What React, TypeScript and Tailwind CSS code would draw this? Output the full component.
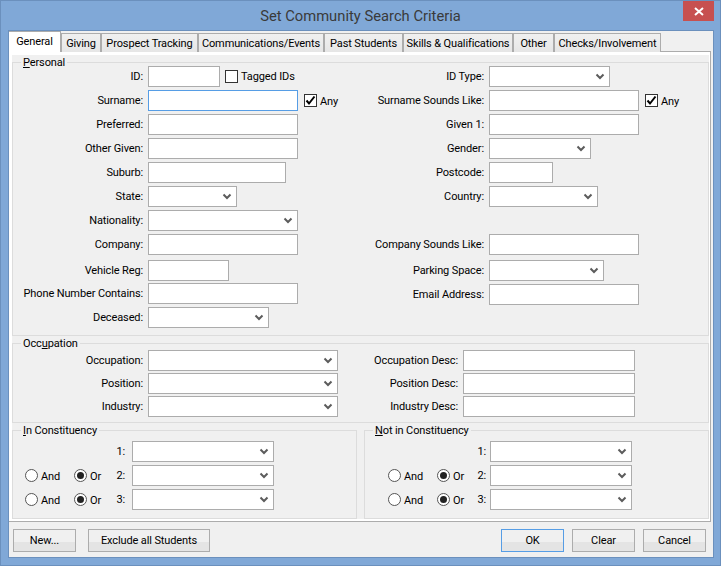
import type { ReactNode } from 'react';

const FONT = "font-['Roboto',sans-serif] text-[11px] tracking-[-0.12px] leading-[14px] text-black";

function Chevron() {
    return (
        <svg width="10" height="7" viewBox="0 0 10 7" className="shrink-0">
            <path d="M1.5 1.5 L5 5 L8.5 1.5" fill="none" stroke="#5c5c5c" strokeWidth="2" />
        </svg>
    );
}

interface BoxProps {
    width: string;
    select?: boolean;
    focused?: boolean;
}

function Box({ width, select, focused }: BoxProps) {
    return (
        <div
            className={`h-[21px] shrink-0 bg-white border flex items-center justify-end pr-[4px] ${width} ${
                focused ? 'border-[#569de5]' : 'border-[#acacac]'
            }`}
        >
            {select && <Chevron />}
        </div>
    );
}

interface FieldProps extends BoxProps {
    label: string;
    labelWidth?: string;
    className?: string;
    children?: ReactNode;
}

function Field({ label, labelWidth = 'w-[130px]', className = '', children, ...box }: FieldProps) {
    return (
        <div className={`flex items-center h-[21px] ${className}`}>
            <span className={`text-right whitespace-nowrap mr-[5px] ${labelWidth}`}>{label}</span>
            <Box {...box} />
            {children}
        </div>
    );
}

function Check({ label, checked, className = '' }: { label: string; checked?: boolean; className?: string }) {
    return (
        <div className={`flex items-center ${className}`}>
            <div className="w-[13px] h-[13px] bg-white border border-[#333] flex items-center justify-center">
                {checked && (
                    <svg width="11" height="11" viewBox="0 0 11 11">
                        <path d="M1.5 5.5 L4 8.5 L9.5 1.5" fill="none" stroke="#000" strokeWidth="2" />
                    </svg>
                )}
            </div>
            <span className={`ml-[3px] whitespace-nowrap ${checked ? 'pt-[2px]' : ''}`}>{label}</span>
        </div>
    );
}

function Radio({ label, checked, width }: { label: string; checked?: boolean; width: string }) {
    return (
        <div className={`flex items-center shrink-0 ${width}`}>
            <div className="w-[13px] h-[13px] rounded-full bg-white border border-[#555] flex items-center justify-center">
                {checked && <div className="w-[7px] h-[7px] rounded-full bg-[#222]" />}
            </div>
            <span className="ml-[3px] pt-[2px]">{label}</span>
        </div>
    );
}

function Group({ legend, className = '', children }: { legend: ReactNode; className?: string; children: ReactNode }) {
    return (
        <fieldset className={`border border-[#dcdcdc] min-w-0 ${className}`}>
            <legend className="ml-[8px] px-[2px] h-[14px] pt-[1px]">{legend}</legend>
            {children}
        </fieldset>
    );
}

function ConstituencyRows({ pad, labelW, gap }: { pad: string; labelW: string; gap: string }) {
    const row = (n: number) => (
        <div className={`flex items-center h-[21px] ${pad} ${n > 1 ? 'mt-[3px]' : 'mt-[4px]'}`}>
            <div className="flex w-[88px] shrink-0">
                {n > 1 && (
                    <>
                        <Radio label="And" width="w-[49px]" />
                        <Radio label="Or" checked width="w-[39px]" />
                    </>
                )}
            </div>
            <span className={`text-right ${labelW} ${gap}`}>{n}:</span>
            <Box width="w-[142px]" select />
        </div>
    );
    return (
        <>
            {row(1)}
            {row(2)}
            {row(3)}
        </>
    );
}

function Button({ label, width, focused }: { label: string; width: string; focused?: boolean }) {
    return (
        <div
            className={`h-[23px] pt-[1px] flex items-center justify-center border bg-[linear-gradient(#f0f0f0_55%,#e4e4e4_55%)] ${width} ${
                focused ? 'border-[#569de5]' : 'border-[#acacac]'
            }`}
        >
            {label}
        </div>
    );
}

const TABS = [
    { label: 'Giving', width: 'w-[40px]' },
    { label: 'Prospect Tracking', width: 'w-[97px]' },
    { label: 'Communications/Events', width: 'w-[126px]' },
    { label: 'Past Students', width: 'w-[79px]' },
    { label: 'Skills & Qualifications', width: 'w-[110px]' },
    { label: 'Other', width: 'w-[41px]' },
    { label: 'Checks/Involvement', width: 'w-[107px]' },
];

export default function App() {
    return (
        <div className={`relative w-[721px] h-[566px] bg-[#80a8d7] border border-[#6b90bd] overflow-hidden ${FONT}`}>
            {/* Title bar */}
            <div className="h-[29px] flex items-center justify-center text-[14.75px] tracking-normal text-[#3a3a3a]">
                Set Community Search Criteria
            </div>
            <div className="absolute top-0 left-[682px] w-[31px] h-[20px] bg-[#c75050] flex items-center justify-center">
                <svg width="10" height="9" viewBox="0 0 10 9">
                    <path d="M1 1 L9 8 M9 1 L1 8" stroke="#fff" strokeWidth="2" />
                </svg>
            </div>

            {/* Client area */}
            <div className="ml-[7px] w-[706px] h-[528px] bg-[#f0f0f0] border border-[#6b90bd]">
                {/* Tabs */}
                <div className="flex h-[21px] items-end relative z-10">
                    <div className="w-[52px] h-[21px] bg-white border-t border-r border-[#acacac] flex items-center justify-center">
                        General
                    </div>
                    {TABS.map((tab) => (
                        <div
                            key={tab.label}
                            className={`h-[19px] pt-[1px] bg-[linear-gradient(#f0f0f0,#e6e6e6)] border border-b-0 border-[#acacac] flex items-center justify-center whitespace-nowrap ${tab.width}`}
                        >
                            {tab.label}
                        </div>
                    ))}
                </div>

                {/* Tab panel */}
                <div className="w-[702px] h-[471px] bg-white border border-l-0 border-[#acacac] pl-[3px] pr-[1px] pt-[3px] -mt-px">
                    <div className="h-[464px] bg-[#f0f0f0]">
                        <Group legend={<><u>P</u>ersonal</>} className="h-[281px]">
                            <div className="flex -mt-[3px]">
                                <div className="w-[341px] shrink-0">
                                    <Field label="ID:" width="w-[72px]">
                                        <Check label="Tagged IDs" className="ml-[5px]" />
                                    </Field>
                                    <Field label="Surname:" width="w-[150px]" focused className="mt-[3px]">
                                        <Check label="Any" checked className="ml-[6px]" />
                                    </Field>
                                    <Field label="Preferred:" width="w-[150px]" className="mt-[3px]" />
                                    <Field label="Other Given:" width="w-[150px]" className="mt-[3px]" />
                                    <Field label="Suburb:" width="w-[138px]" className="mt-[3px]" />
                                    <Field label="State:" width="w-[89px]" select className="mt-[3px]" />
                                    <Field label="Nationality:" width="w-[150px]" select className="mt-[3px]" />
                                    <Field label="Company:" width="w-[150px]" className="mt-[3px]" />
                                    <Field label="Vehicle Reg:" width="w-[81px]" className="mt-[5px]" />
                                    <Field label="Phone Number Contains:" width="w-[150px]" className="mt-[2px]" />
                                    <Field label="Deceased:" width="w-[121px]" select className="mt-[3px]" />
                                </div>
                                <div>
                                    <Field label="ID Type:" width="w-[121px]" select />
                                    <Field label="Surname Sounds Like:" width="w-[150px]" className="mt-[3px]">
                                        <Check label="Any" checked className="ml-[6px]" />
                                    </Field>
                                    <Field label="Given 1:" width="w-[150px]" className="mt-[3px]" />
                                    <Field label="Gender:" width="w-[102px]" select className="mt-[3px]" />
                                    <Field label="Postcode:" width="w-[64px]" className="mt-[3px]" />
                                    <Field label="Country:" width="w-[109px]" select className="mt-[3px]" />
                                    <Field label="Company Sounds Like:" width="w-[150px]" className="mt-[27px]" />
                                    <Field label="Parking Space:" width="w-[115px]" select className="mt-[5px]" />
                                    <Field label="Email Address:" width="w-[150px]" className="mt-[3px]" />
                                </div>
                            </div>
                        </Group>

                        <Group legend={<>Occ<u>u</u>pation</>} className="h-[87px]">
                            <div className="flex">
                                <Field label="Occupation:" width="w-[190px]" select />
                                <Field label="Occupation Desc:" labelWidth="w-[120px]" width="w-[172px]" />
                            </div>
                            <div className="flex mt-[2px]">
                                <Field label="Position:" width="w-[190px]" select />
                                <Field label="Position Desc:" labelWidth="w-[120px]" width="w-[172px]" />
                            </div>
                            <div className="flex mt-[2px]">
                                <Field label="Industry:" width="w-[190px]" select />
                                <Field label="Industry Desc:" labelWidth="w-[120px]" width="w-[172px]" />
                            </div>
                        </Group>

                        <div className="flex gap-[7px]">
                            <Group legend={<><u>I</u>n Constituency</>} className="w-[345px] h-[96px]">
                                <ConstituencyRows pad="pl-[12px]" labelW="w-[12px]" gap="mr-[7px]" />
                            </Group>
                            <Group legend={<><u>N</u>ot in Constituency</>} className="w-[345px] h-[96px]">
                                <ConstituencyRows pad="pl-[23px]" labelW="w-[10px]" gap="mr-[4px]" />
                            </Group>
                        </div>
                    </div>
                </div>

                {/* Buttons */}
                <div className="flex justify-between pl-[4px] pr-[7px] pt-[7px]">
                    <div className="flex gap-[12px]">
                        <Button label="New..." width="w-[63px]" />
                        <Button label="Exclude all Students" width="w-[122px]" />
                    </div>
                    <div className="flex gap-[8px]">
                        <Button label="OK" width="w-[63px]" focused />
                        <Button label="Clear" width="w-[63px]" />
                        <Button label="Cancel" width="w-[63px]" />
                    </div>
                </div>
            </div>
        </div>
    );
}
